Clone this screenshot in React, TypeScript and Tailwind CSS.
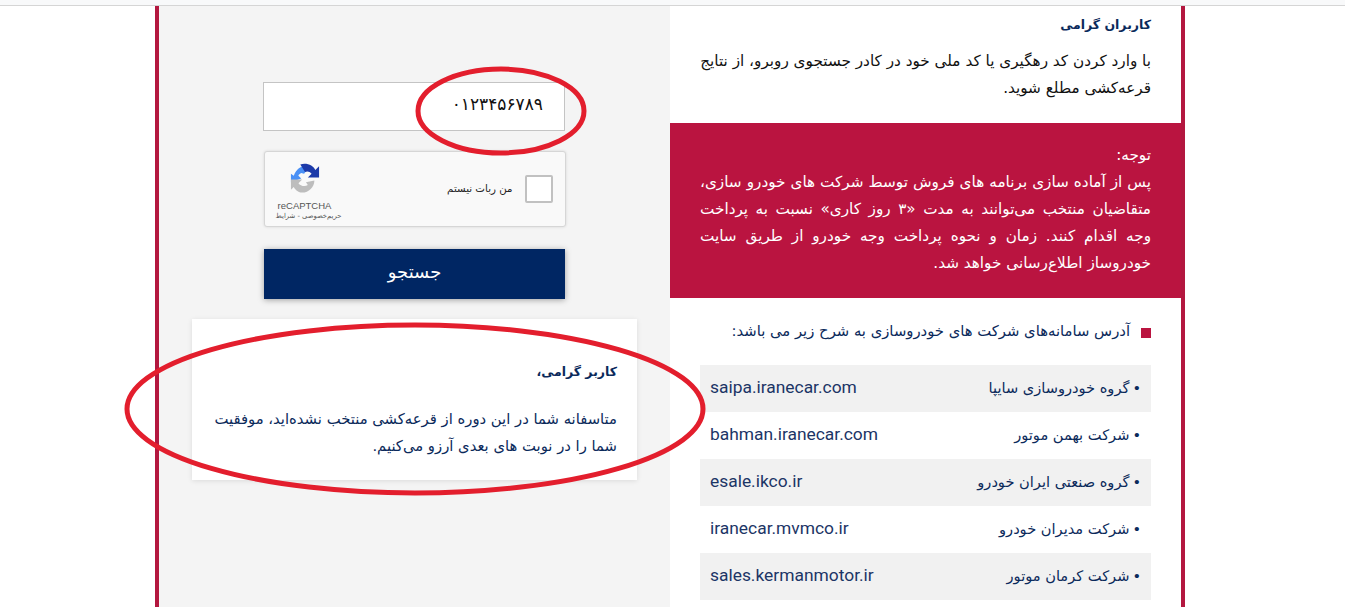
const font = "font-['DejaVu_Sans',sans-serif]"

const sites = [
  { name: "گروه خودروسازی سایپا", url: "saipa.iranecar.com" },
  { name: "شرکت بهمن موتور", url: "bahman.iranecar.com" },
  { name: "گروه صنعتی ایران خودرو", url: "esale.ikco.ir" },
  { name: "شرکت مدیران خودرو", url: "iranecar.mvmco.ir" },
  { name: "شرکت کرمان موتور", url: "sales.kermanmotor.ir" },
]

function RecaptchaLogo() {
  return (
    <svg width="30" height="31" viewBox="0 0 32 32" className="block">
      <path d="M1 20 L1 11 L4 13 C7 5 14 1 21 3 L15 11 L12 10 C10 11 9 12 9 13 L12 16 L1 20Z" fill="#4a90f5" />
      <path d="M11 1 C18 -1 25 2 27 7 L31 3 L31 15 L19 15 L23 11 C21 8 18 8 16 9 L11 1Z" fill="#1c3aa9" />
      <path d="M1 17 L13 17 L9 21 C11 24 16 25 19 23 L17 20 L26 18 C26 25 20 31 13 31 C8 31 5 27 4 25 L1 28 Z" fill="#bdbdbd" />
    </svg>
  )
}

function SearchForm() {
  return (
    <div className="flex flex-col items-center pt-[76px]">
      <div className="ml-[-1px] flex h-[49px] w-[302px] items-center border border-[#c4c4c4] bg-white pb-1 pr-[21px] text-[17px] text-[#111]">
        ۰۱۲۳۴۵۶۷۸۹
      </div>

      <div className="mt-5 flex h-[76px] w-[302px] items-center justify-between rounded-[3px] border border-[#d6d6d6] bg-[#f9f9f9] pl-[6px] pr-3 shadow-[0_0_3px_rgba(0,0,0,0.12)]">
        <div className="flex items-center gap-3">
          <div className="h-7 w-7 rounded-[2px] border-2 border-[#c1c1c1] bg-white" />
          <span className="text-[10.25px] text-[#222]">من ربات نیستم</span>
        </div>
        <div className="flex w-[68px] flex-col items-center pt-1.5">
          <RecaptchaLogo />
          <span className="mt-1.5 font-['Liberation_Sans',sans-serif] text-[9.5px] leading-[12px] text-[#555]">reCAPTCHA</span>
          <span className="mr-[-8px] whitespace-nowrap text-[6.8px] leading-[9px] text-[#555]">حریم‌خصوصی - شرایط</span>
        </div>
      </div>

      <button className="mt-[22px] h-[50px] w-[301px] bg-[#002663] pb-1.5 text-[18px] text-white shadow-[0_1px_6px_rgba(0,0,0,0.35)]">
        جستجو
      </button>

      <div className="mt-5 h-[161px] w-[445px] bg-white px-5 pt-[41px] text-[#0b2a5b] shadow-[0_1px_5px_rgba(0,0,0,0.1)]">
        <h3 className="text-[12.5px] font-bold leading-6">کاربر گرامی،</h3>
        <p className="mt-[21px] text-[14.8px] leading-[27px]">
          متاسفانه شما در این دوره از قرعه‌کشی منتخب نشده‌اید، موفقیت شما را در نوبت های بعدی آرزو می‌کنیم.
        </p>
      </div>
    </div>
  )
}

function InfoColumn() {
  return (
    <div className="flex flex-col">
      <div className="h-[117px] px-[30px] pt-[7px]">
        <h2 className="text-[12.5px] font-bold leading-6 text-[#0b2a5b]">کاربران گرامی</h2>
        <p className="mt-[11px] text-[15.25px] leading-[27px] text-[#111]">
          با وارد کردن کد رهگیری یا کد ملی خود در کادر جستجوی روبرو، از نتایج قرعه‌کشی مطلع شوید.
        </p>
      </div>

      <div className="h-[175px] bg-[#ba1440] px-[30px] pt-[19px] text-justify text-[15.25px] leading-[27px] text-white">
        <div>توجه:</div>
        <p>
          پس از آماده سازی برنامه های فروش توسط شرکت های خودرو سازی، متقاضیان منتخب می‌توانند به مدت «۳ روز کاری» نسبت به پرداخت وجه اقدام کنند. زمان و نحوه پرداخت وجه خودرو از طریق سایت خودروساز اطلاع‌رسانی خواهد شد.
        </p>
      </div>

      <div className="px-[30px] pt-[19px]">
        <div className="flex items-center gap-[11px] text-[14.8px] leading-[27px] text-[#0b2a5b]">
          <span className="mt-1 h-[10px] w-[10px] bg-[#ba1440]" />
          <span>آدرس سامانه‌های شرکت های خودروسازی به شرح زیر می باشد:</span>
        </div>
        <div className="mt-[21px]">
          {sites.map((site) => (
            <div key={site.url} className="flex h-[47px] items-center justify-between px-[10px] pb-0.5 odd:bg-[#f1f1f1]">
              <span className="flex items-center gap-[3px] text-[14.6px] text-[#0b2a5b]">
                <span>•</span>
                <span>{site.name}</span>
              </span>
              <span dir="ltr" className="font-['Roboto',sans-serif] text-[17.4px] text-[#1c3566]">{site.url}</span>
            </div>
          ))}
        </div>
      </div>
    </div>
  )
}

export default function App() {
  return (
    <div className={`relative h-[607px] overflow-hidden bg-white ${font}`}>
      <div className="h-[6px] border-b border-[#d5d5d5] bg-[#f8f9fa]" />
      <div className="ml-[155px] grid h-[601px] w-[1030px] grid-cols-2 border-x-4 border-[#b3173f]">
        <div dir="rtl" className="bg-[#f4f4f4]">
          <SearchForm />
        </div>
        <div dir="rtl">
          <InfoColumn />
        </div>
      </div>

      {/* red marker circles drawn over the screenshot */}
      <svg className="pointer-events-none absolute left-0 top-0" width="1345" height="607">
        <ellipse cx="501" cy="111" rx="83" ry="42" fill="none" stroke="#e31e2d" strokeWidth="5" />
        <ellipse cx="415" cy="409" rx="288" ry="84" fill="none" stroke="#e31e2d" strokeWidth="5" />
      </svg>
    </div>
  )
}
